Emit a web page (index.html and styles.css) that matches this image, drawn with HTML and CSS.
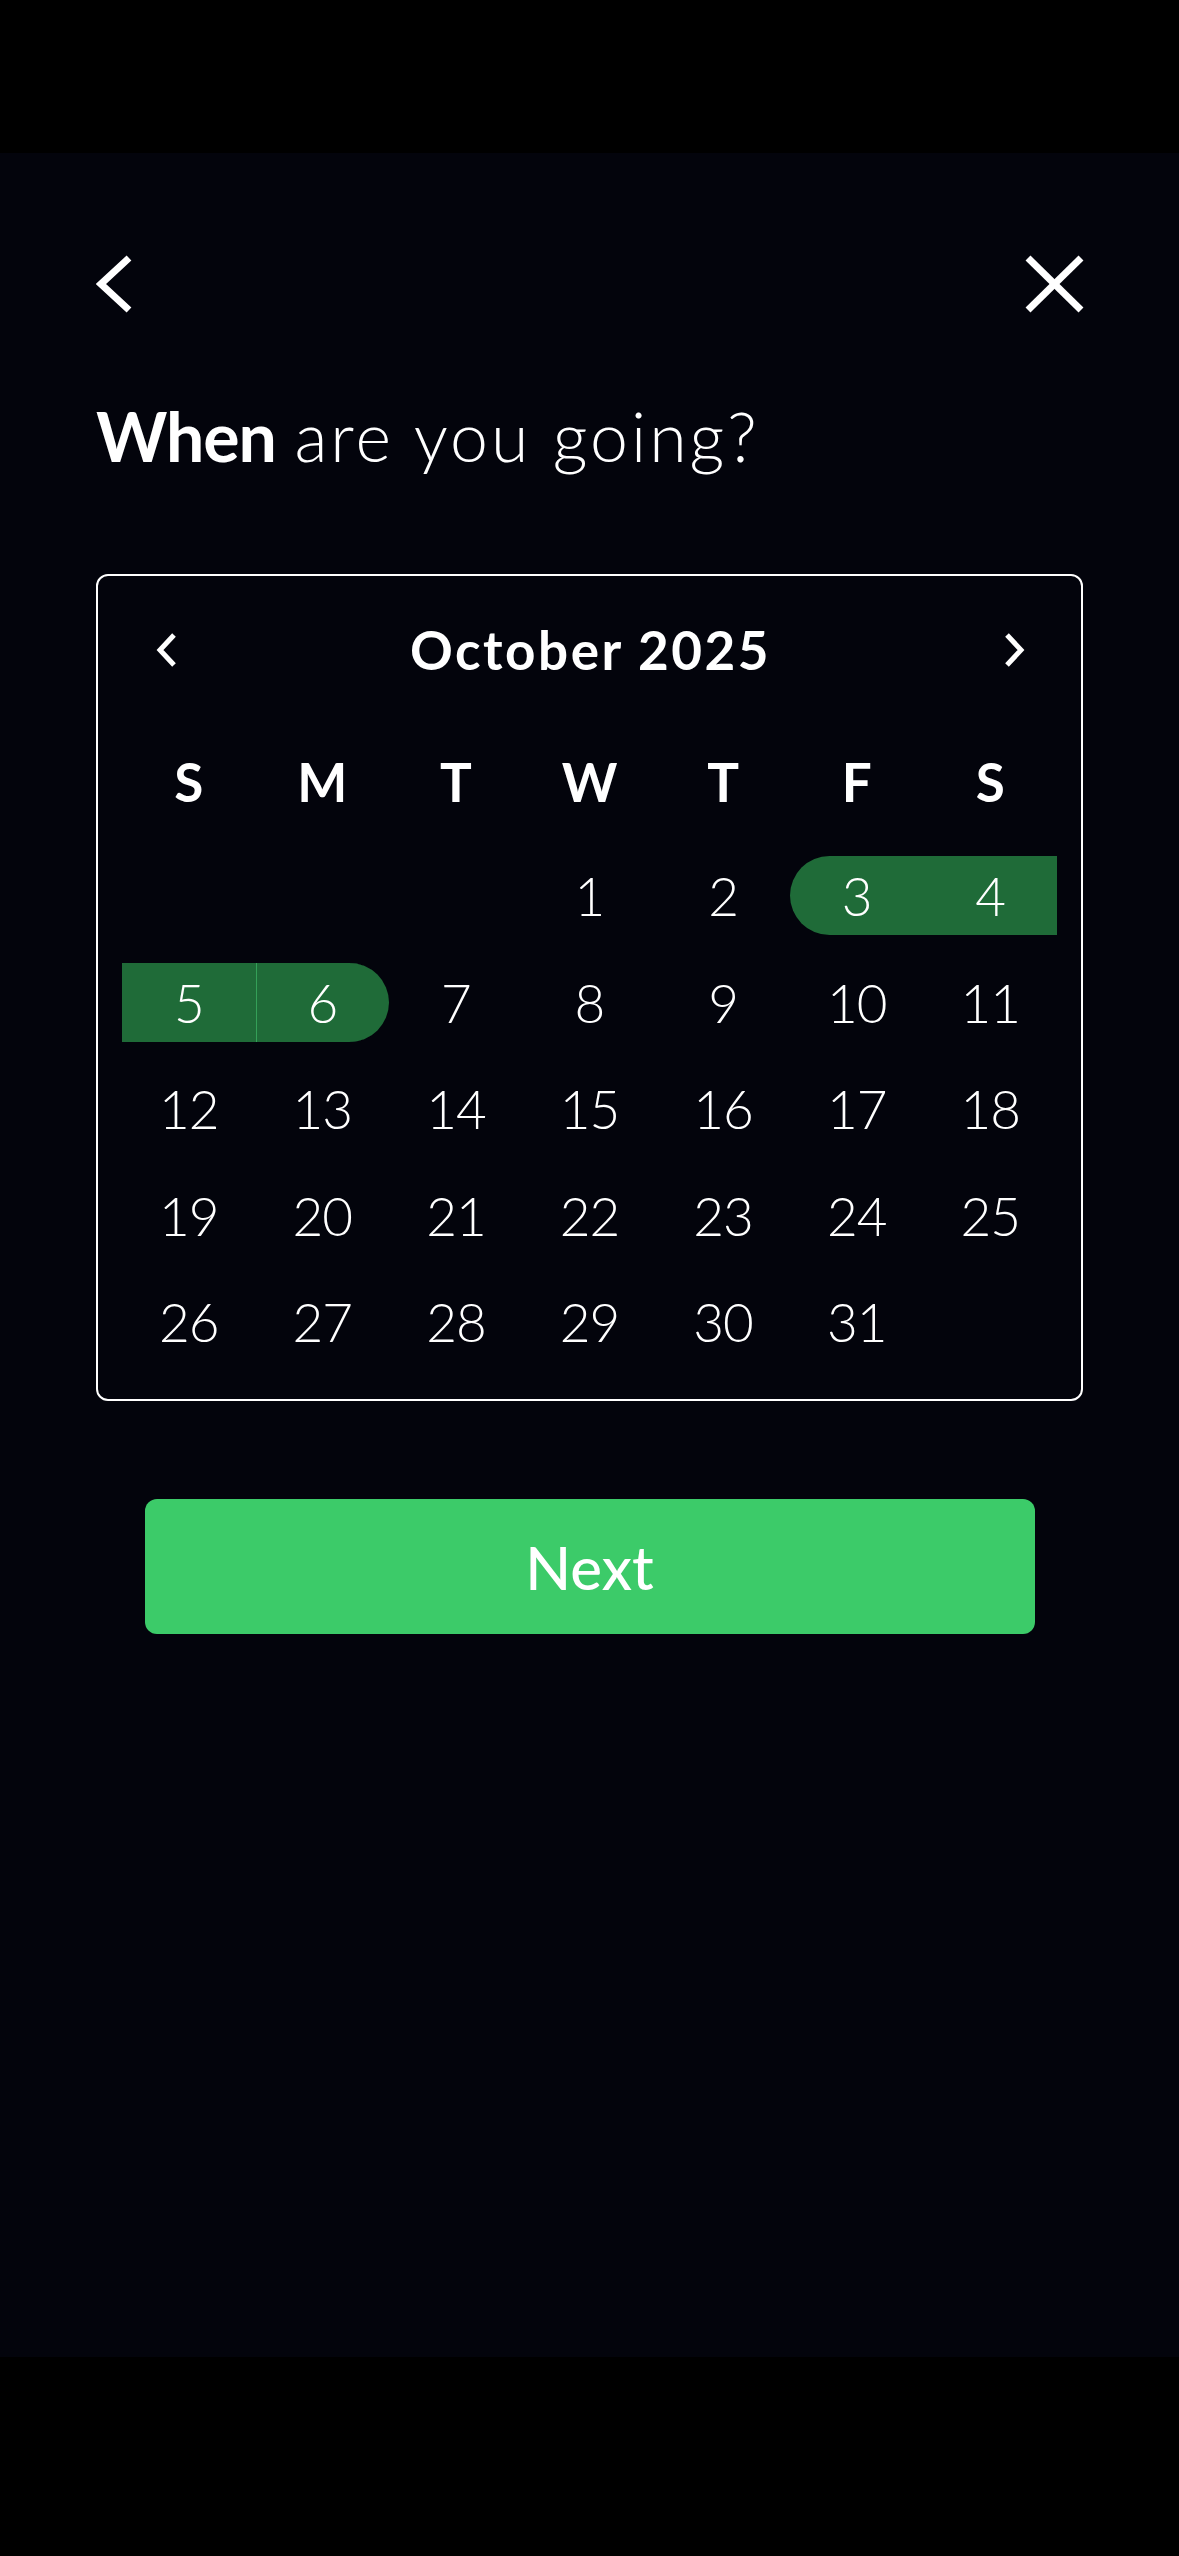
FILE: index.html
```html
<!DOCTYPE html>
<html lang="en">

<head>
	<meta charset="UTF-8">
	<meta name="viewport" content="width=device-width, initial-scale=1.0">
	<title>When are you going?</title>
	<link rel="stylesheet" href="styles.css">
</head>

<body>
	<div class="screen">
		<div class="topbar">
			<svg class="back" width="36" height="62" viewBox="0 0 36 62">
				<polyline points="33,5 5,31 33,57" />
			</svg>
			<svg class="close" width="64" height="62" viewBox="0 0 64 62">
				<line x1="6" y1="5" x2="59" y2="57" />
				<line x1="59" y1="5" x2="6" y2="57" />
			</svg>
		</div>

		<h1 class="title"><b>When</b> <span class="light">are you going?</span></h1>

		<div class="calendar">
			<div class="cal-head">
				<svg class="chev" width="24" height="36" viewBox="0 0 24 36">
					<polyline points="18,3 4,18 18,33" />
				</svg>
				<span class="month">October 2025</span>
				<svg class="chev" width="24" height="36" viewBox="0 0 24 36">
					<polyline points="6,3 20,18 6,33" />
				</svg>
			</div>

			<div class="weekdays">
				<span>S</span><span>M</span><span>T</span><span>W</span><span>T</span><span>F</span><span>S</span>
			</div>

			<div class="days">
				<span></span><span></span><span></span>
				<span>1</span>
				<span>2</span>
				<span class="range start">3</span>
				<span class="range">4</span>
				<span class="range">5</span>
				<span class="range end split">6</span>
				<span>7</span><span>8</span><span>9</span><span>10</span><span>11</span>
				<span>12</span><span>13</span><span>14</span><span>15</span><span>16</span><span>17</span><span>18</span>
				<span>19</span><span>20</span><span>21</span><span>22</span><span>23</span><span>24</span><span>25</span>
				<span>26</span><span>27</span><span>28</span><span>29</span><span>30</span><span>31</span>
			</div>
		</div>

		<button class="next">Next</button>
	</div>
</body>

</html>
```

FILE: styles.css
```css
* {
	box-sizing: border-box;
}

body {
	margin: 0;
	background: #000;
	font-family: Lato, "Noto Sans", sans-serif;
	color: #fff;
}

.screen {
	margin-top: 153px;
	height: 2204px;
	padding: 0 96px;
	background: #03040c;
}

.topbar {
	display: flex;
	justify-content: space-between;
	padding-top: 100px;
}

.topbar svg {
	display: block;
	fill: none;
	stroke: #fff;
	stroke-width: 7;
}

.close {
	margin-right: -3px;
}

.title {
	margin: 87px 0 0;
	font-size: 68px;
	line-height: 68px;
	font-weight: 300;
}

.title b {
	font-weight: 700;
	letter-spacing: -1px;
}

.title .light {
	letter-spacing: 3px;
}

.calendar {
	margin-top: 104px;
	border: 2px solid #fff;
	border-radius: 12px;
	padding: 34px 24px 38px;
}

.cal-head {
	display: flex;
	justify-content: space-between;
	align-items: center;
	height: 80px;
	padding: 0 32px 0 34px;
}

.chev {
	fill: none;
	stroke: #fff;
	stroke-width: 5;
}

.month {
	font-size: 53px;
	font-weight: 700;
	line-height: 80px;
	letter-spacing: 2.5px;
}

.weekdays,
.days {
	display: grid;
	grid-template-columns: repeat(7, 1fr);
	text-align: center;
	font-size: 53px;
}

.weekdays {
	margin-top: 62px;
	line-height: 60px;
	font-weight: 700;
}

.days {
	margin-top: 44px;
	row-gap: 27.5px;
	font-weight: 300;
	line-height: 79px;
	letter-spacing: -1px;
}

.days span {
	height: 79px;
}

.range {
	background: #1f6b38;
}

.range.start {
	border-radius: 40px 0 0 40px;
}

.range.end {
	border-radius: 0 40px 40px 0;
}

.split {
	box-shadow: inset 1px 0 #34a058;
}

.next {
	display: block;
	width: 890px;
	height: 135px;
	margin: 98px auto 0;
	border: none;
	border-radius: 12px;
	background: #3ccb69;
	color: #fff;
	font-family: inherit;
	font-size: 60px;
	font-weight: 500;
}
```
